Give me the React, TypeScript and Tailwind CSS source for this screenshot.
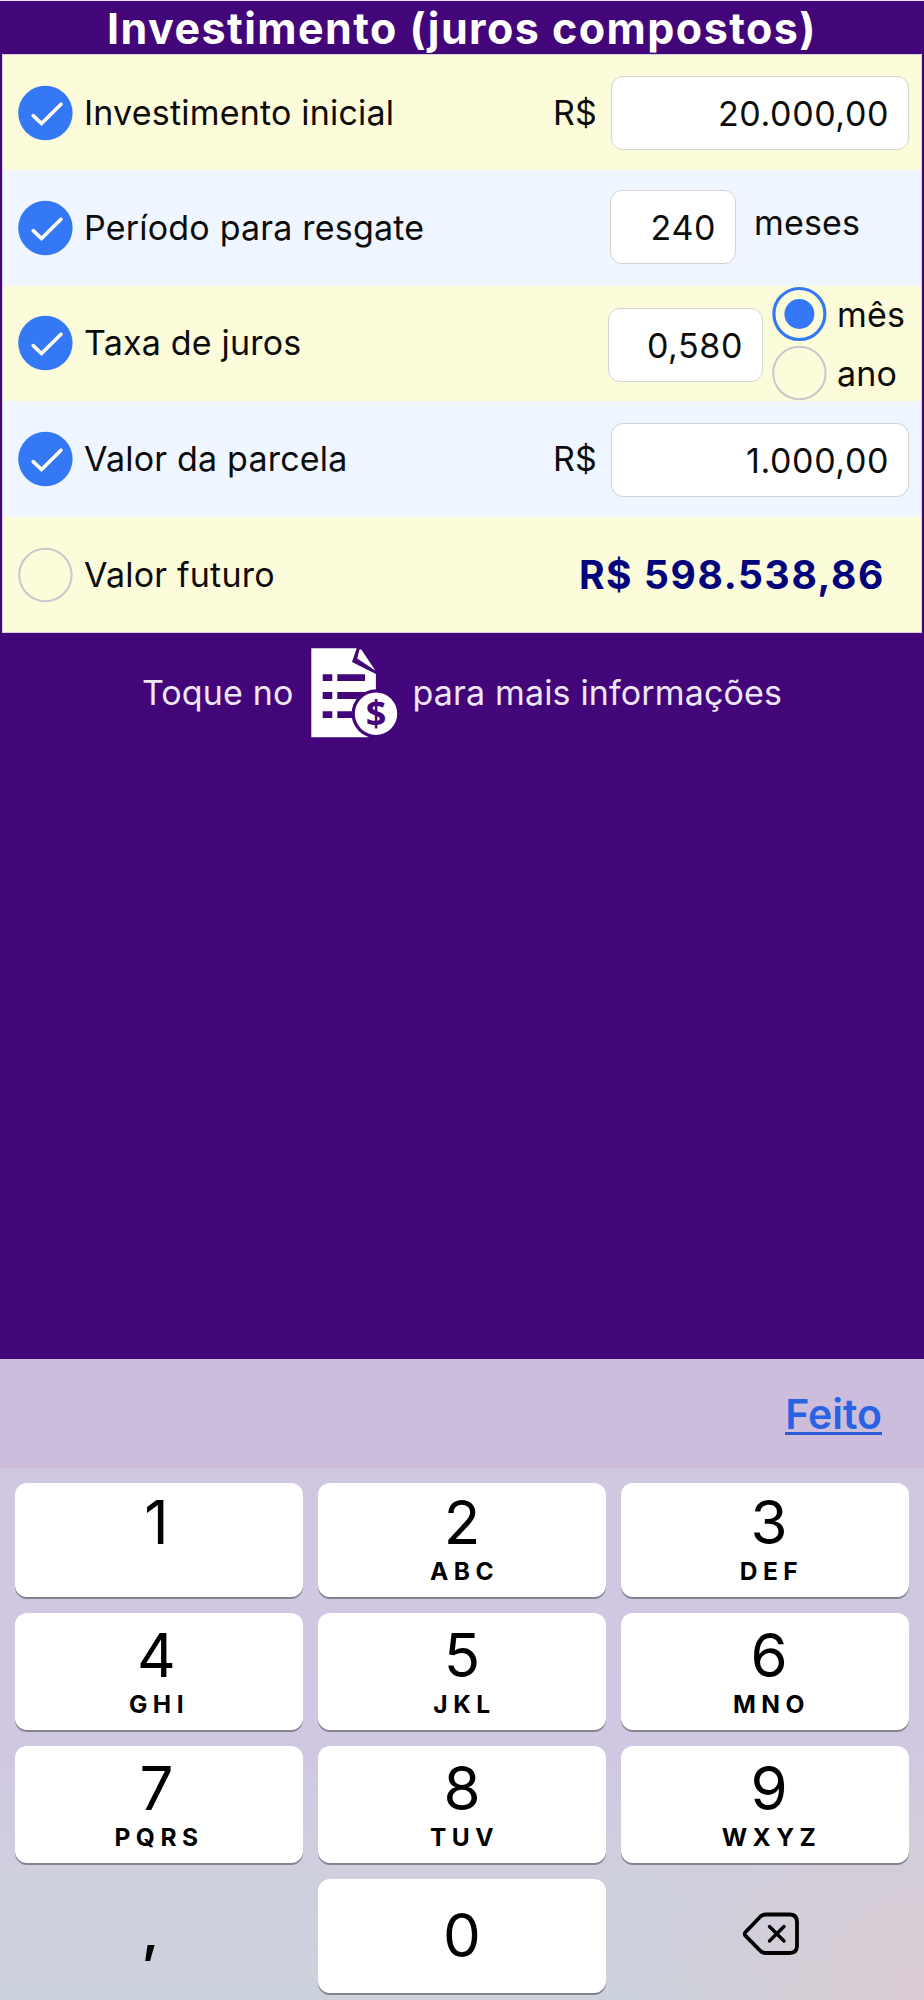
import type { ReactNode } from "react";

function Check({ checked }: { checked: boolean }) {
  return (
    <svg viewBox="0 0 56 56" className="h-14 w-14 shrink-0" role="img">
      {checked ? (
        <>
          <circle cx="28.4" cy="28" r="27.2" fill="#3478f6" />
          <path d="M16.2 30.6 24.5 38.6 44 19.2" fill="none" stroke="#fdfdf0" strokeWidth="3.6" strokeLinejoin="miter" strokeLinecap="round" />
        </>
      ) : (
        <circle cx="28.4" cy="28" r="26.2" fill="none" stroke="#c7c7cc" strokeWidth="2" />
      )}
    </svg>
  );
}

function Radio({ label, selected }: { label: string; selected: boolean }) {
  return (
    <div className="flex h-[59px] items-center">
      <svg viewBox="0 0 56 56" className="h-14 w-14 shrink-0" role="img">
        {selected ? (
          <>
            <circle cx="28.4" cy="28" r="25.5" fill="none" stroke="#3478f6" strokeWidth="3.2" />
            <circle cx="28.4" cy="28" r="15" fill="#3478f6" />
          </>
        ) : (
          <circle cx="28.4" cy="28" r="26.2" fill="none" stroke="#c7c7cc" strokeWidth="2" />
        )}
      </svg>
      <span className="pl-[10px] pt-0.5">{label}</span>
    </div>
  );
}

function Row({ label, checked, tone, children }: { label: string; checked: boolean; tone: string; children: ReactNode }) {
  return (
    <div className={`flex items-center ${tone}`}>
      <div className="ml-[14px] flex flex-1 items-center">
        <Check checked={checked} />
        <span className="pl-[11px] tracking-[0.2px]">{label}</span>
      </div>
      {children}
    </div>
  );
}

function Field({ value, size }: { value: string; size: string }) {
  return (
    <div className={`flex h-[74px] items-center justify-end rounded-xl border border-[#d3d3d3] bg-white pr-[19px] pt-[2px] tracking-[0.6px] ${size}`}>
      {value}
    </div>
  );
}

const CREAM = "bg-[#fcfbda]";
const ICE = "bg-[#eff6ff]";
const LOWER_CREAM = "bg-[#fcfbda] pt-[1px]";
const LOWER_ICE = "bg-[#eff6ff] pt-[1px]";

const KEYS = [
  ["1", "", "pt-[16px] pr-[5px]"],
  ["2", "ABC", "pt-[16px]"],
  ["3", "DEF", "pt-[16px] pl-[8px]"],
  ["4", "GHI", "pt-[19px] pr-[5px]"],
  ["5", "JKL", "pt-[19px]"],
  ["6", "MNO", "pt-[19px] pl-[8px]"],
  ["7", "PQRS", "pt-[19px] pr-[5px]"],
  ["8", "TUV", "pt-[19px]"],
  ["9", "WXYZ", "pt-[19px] pl-[8px]"],
];

function Key({ digit, letters, inset }: { digit: string; letters: string; inset: string }) {
  return (
    <div className={`flex flex-col items-center rounded-xl bg-white shadow-[0_2px_0_#858390] ${inset}`}>
      <span className="h-[46px] text-[60px] leading-[46px]">{digit}</span>
      <span className="mt-[13px] pl-[5px] text-[24.5px] font-bold leading-[26px] tracking-[5.5px]">{letters}</span>
    </div>
  );
}

export default function App() {
  return (
    <div className="flex h-[2000px] w-[924px] flex-col bg-[#43067a] font-['Inter',sans-serif] text-[34px] leading-[40px] tracking-[0.15px] text-[#0c0c0c]">
      <header className="flex h-[54px] shrink-0 items-center justify-center border-t border-[#e9e4ee] text-[43px] font-bold tracking-[1.45px] text-white">
        Investimento (juros compostos)
      </header>

      <main className="mx-[2px] grid h-[579px] shrink-0 grid-rows-5 border border-[#d9d0de]">
        <Row label="Investimento inicial" checked tone={CREAM}>
          <span className="pr-[14px]">R$</span>
          <Field value="20.000,00" size="w-[298px] mr-[12px]" />
        </Row>
        <Row label="Período para resgate" checked tone={ICE}>
          <Field value="240" size="w-[126px] mb-[2px]" />
          <span className="w-[185px] pb-[11px] pl-[18px]">meses</span>
        </Row>
        <Row label="Taxa de juros" checked tone={CREAM}>
          <Field value="0,580" size="w-[155px] mt-[3px]" />
          <div className="flex h-[118px] w-[158px] flex-col pl-[8px]">
            <Radio label="mês" selected />
            <Radio label="ano" selected={false} />
          </div>
        </Row>
        <Row label="Valor da parcela" checked tone={LOWER_ICE}>
          <span className="pr-[14px]">R$</span>
          <Field value="1.000,00" size="w-[298px] mr-[12px] mt-[2px]" />
        </Row>
        <Row label="Valor futuro" checked={false} tone={LOWER_CREAM}>
          <span className="pr-[36px] text-[39px] font-bold tracking-[1.6px] text-[#02027c]">R$ 598.538,86</span>
        </Row>
      </main>

      <p className="flex h-[119px] shrink-0 items-center justify-center text-[#eee6f4]">
        <span>Toque no</span>
        <svg viewBox="0 0 88 92" className="ml-[16px] mr-[15px] h-[92px] w-[88px]" role="img">
          <path d="M1.3 1.3H46.7L42 14.9 65.9 27V90.3H1.3Z" fill="#fff" />
          <path d="M49.4 3Q50.4 1.6 51.8 3.2L65.3 23.5 47.2 11.5Z" fill="#fff" />
          <path d="M12.7 27.3h9.6v6.7h-9.6zM27.3 27.3h27.7v6.7H27.3zM12.7 45h9.6v6.9h-9.6zM27.3 45h30v6.9h-30zM12.7 64.3h9.6v6.6h-9.6zM27.3 64.3h20v6.6h-20z" fill="#43067a" />
          <path d="M56 91.5 66 85.5V91.5Z" fill="#43067a" />
          <circle cx="66" cy="66.7" r="24.4" fill="#43067a" />
          <circle cx="66" cy="66.7" r="21.2" fill="#fff" />
          <text x="66" y="79.4" textAnchor="middle" fontFamily="Open Sans" fontWeight="700" fontSize="36" letterSpacing="0" fill="#43067a">$</text>
        </svg>
        <span>para mais informações</span>
      </p>

      <section className="mt-auto flex h-[641px] shrink-0 flex-col bg-[radial-gradient(ellipse_300px_260px_at_100%_100%,#dacbd3,transparent),linear-gradient(to_bottom,#d0c8e1_0%,#d0c8e2_62%,#cfcfde_80%,#ccd2dc_100%)] tracking-normal text-black">
        <div className="flex h-[109px] shrink-0 items-center justify-end bg-[#ccbddd] pr-[42px]">
          <span className="border-b-[3px] border-[#2f5bd8] pt-[4px] text-[41px] font-semibold leading-[36px] text-[#2a62e4]">Feito</span>
        </div>
        <div className="grid grid-cols-3 grid-rows-[114px_117px_117px_114px] gap-x-[15px] gap-y-4 px-[15px] pt-[15px]">
          {KEYS.map(([digit, letters, inset]) => (
            <Key key={digit} digit={digit} letters={letters} inset={inset} />
          ))}
          <div className="flex items-center justify-center pb-[9px] pr-[17px] text-[54px] font-semibold">,</div>
          <div className="flex items-center justify-center rounded-xl bg-white pb-[3px] text-[60px] shadow-[0_2px_0_#80838e]">0</div>
          <div className="flex items-center justify-center pb-[4px] pl-[12px]">
            <svg viewBox="0 0 58 44" className="h-11 w-[58px]" fill="none" stroke="#000" strokeWidth="3.8" strokeLinecap="round" strokeLinejoin="round" role="img">
              <path d="M3.4 20.3 18.5 4.5Q20.8 2.5 23.8 2.5H47.5Q55 2.5 55 10V33.5Q55 41 47.5 41H23.8Q20.8 41 18.5 39L3.4 23.7Q2 22 3.4 20.3Z" />
              <path d="M27.5 14.5 42 29M42 14.5 27.5 29" strokeWidth="3.4" />
            </svg>
          </div>
        </div>
      </section>
    </div>
  );
}
